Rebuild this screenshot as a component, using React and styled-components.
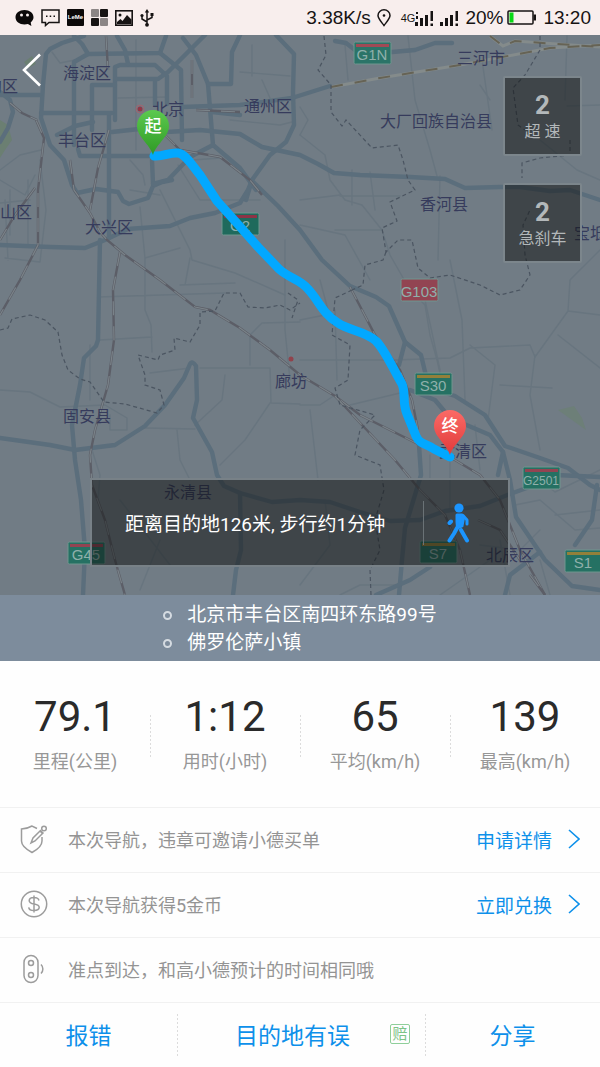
import React from 'react';
import styled, { createGlobalStyle } from 'styled-components';

const stats = [
  { value: '79.1', label: '里程(公里)' },
  { value: '1:12', label: '用时(小时)' },
  { value: '65', label: '平均(km/h)' },
  { value: '139', label: '最高(km/h)' },
];

const alerts = [
  { count: 2, label: '超 速' },
  { count: 2, label: '急刹车' },
];

const places = ['北京市丰台区南四环东路99号', '佛罗伦萨小镇'];

const cities = [
  ['海淀区', 63, 79],
  ['沟区', -14, 92],
  ['北京', 152, 115],
  ['通州区', 244, 112],
  ['丰台区', 58, 146],
  ['山区', 0, 218],
  ['大兴区', 85, 233],
  ['三河市', 457, 64],
  ['大厂回族自治县', 380, 127],
  ['香河县', 420, 210],
  ['宝坻区', 574, 239],
  ['廊坊', 275, 387],
  ['固安县', 63, 422],
  ['永清县', 164, 498],
  ['武清区', 439, 457],
  ['北辰区', 486, 561],
];

const signs = [
  { name: 'G1N', x: 354, y: 42, band: '#a04a55', fill: '#2b7468' },
  { name: 'G2', x: 222, y: 213, band: '#8c3446', fill: '#1f6a5c' },
  { name: 'G103', x: 401, y: 279, band: '#924452', fill: '#924452' },
  { name: 'S30', x: 415, y: 373, band: '#93803a', fill: '#257163' },
  { name: 'G2501', x: 523, y: 467, band: '#924452', fill: '#257163' },
  { name: 'S7', x: 420, y: 541, band: '#93803a', fill: '#257163' },
  { name: 'S1', x: 565, y: 550, band: '#93803a', fill: '#257163' },
  { name: 'G45', x: 68, y: 542, band: '#924452', fill: '#257163' },
];

const highways = [
  'M84 36 62 43 50 49 46 54 43 85 41 118 50 145 64 160 72 185 77 193 96 189 118 192 123 201 129 204 148 198 153 186 162 182 172 180',
  'M74 36 82 44 88 54 160 53 166 36',
  'M74 145V62L88 54M160 53 181 70 182 140',
  'M115 120V67L120 65 155 65 167 76V104',
  'M92 130V85H115M117 79H158L168 72 205 35M155 79V105',
  'M117 36 125 50 128 64M109 114V238',
  'M78 149 80 156H154M152 160 153 184',
  'M0 95H40M41 113H112M57 135 75 126 93 122M112 132 148 128',
  'M183 38 196 55 208 84 213 145 240 168 256 190',
  'M208 84H231L232 52 240 35M276 35 294 54 293 92 294 125 286 142 270 155 252 180 246 200',
  'M150 133 200 130 240 134 262 147 300 155 318 164 334 173 360 175 410 177 445 179 465 188 500 187 520 187 550 191 570 190 600 200',
  'M213 145 190 157 168 180 153 184',
  'M0 92 10 100 13 112 8 128 0 142',
  'M182 107 240 105 292 98 330 86M212 112 240 115',
  'M335 41 346 43 355 50 392 52 415 50 435 43 452 43',
  'M0 245 50 247 85 248 105 240 128 229 170 226 190 218 215 213 240 203 248 190 252 180',
  'M100 240 98 340 96 346 84 358 80 385 72 425 75 460 81 500 85 550 83 595',
  'M0 438 50 445 75 450 115 445 145 426 165 405 184 378 190 364Q192 360 196 366L197 400 193 418 212 452 217 475 224 486 240 493 272 502 300 500 330 502 360 512 390 521 420 520 445 511 480 506 510 494 535 485',
  'M240 493 241 550 236 570 233 595',
  'M252 181 278 206 300 230 322 260 350 286 376 297 389 306 397 324 405 342 421 355 427 380',
  'M405 342 399 365M430 388 455 396 485 415 505 446 540 458 568 468 590 485 600 490',
  'M410 390 435 400 450 418 490 435 503 452 510 480 516 517 545 560 572 586 600 590',
  'M503 452 498 475M600 477 556 475M597 485 592 520 575 545',
  'M419 445 421 475 405 528 402 560 399 595',
  'M376 595 410 580 430 567M505 595 510 575 540 552',
];

const roads = [
  'M0 170 20 155 41 150M52 52 60 63 75 60M118 98 168 97M136 40V150',
  'M0 180 25 195 35 175M0 203 30 200M10 190V235M28 180V245',
  'M40 160 46 210 40 262 5 258M5 200 8 260',
  'M130 160 143 175 145 185M160 190 190 250 192 260 235 273 285 295',
  'M190 258 185 285M140 207 145 258 180 248M145 258 145 310 151 325 152 352M180 285 235 283M98 297 225 293M100 340 152 337',
  'M285 240V330L290 380M250 365V335L262 323 300 322M200 368 270 368 271 403 300 404',
  'M150 373 190 368M225 375 222 400 195 425M270 403 245 440 220 465M145 428 195 429',
  'M0 390 30 392 60 407 105 405 127 418V430H110V415M90 345V400M92 450 100 475 98 500',
  'M177 430 180 460 190 480M140 590 160 540M120 500 170 565',
  'M345 45 348 80M408 36 415 100 430 150 437 176M440 176 438 260M300 135 325 155 330 180 345 200 362 205 382 230 390 255 410 290 425 305 430 335 437 360 445 395',
  'M425 300 440 370M450 260 462 320 465 400M300 200 340 195M300 225 345 235 370 280',
  'M480 85 490 100M567 36 565 100M600 105 567 106M540 140 577 170 600 180M482 60 492 130',
  'M395 360 450 358 470 348 530 345 535 357M470 345 495 365 488 420M500 385 552 388M535 355 530 395 540 450',
  'M568 311 600 315M568 311 570 280 600 250M568 311 535 357M558 335 600 368',
  'M320 280 328 310M300 320 325 315M335 310 337 380M300 360 400 360M350 405 400 393',
  'M300 405 320 405 335 395M310 410 318 480M430 455 430 480M450 420 450 510M475 425 480 470',
  'M540 480 555 492 600 470M515 505 540 500 575 530 600 528M480 545 520 550 540 530M340 595 360 585 400 585',
  'M300 585 330 545 325 500M500 540 510 595M540 560 550 595M555 515 600 510M490 560 440 595',
  'M352 170V205M370 172 375 210M340 196H400M382 230 335 230',
  'M300 107 308 120 300 135M230 120 280 125 292 122M240 72 290 76M252 45V76M262 80 270 98',
  'M130 190 160 195M193 160 220 158M178 165 200 200 260 200',
];

const rails = [
  'M106 36 108 70M109 130 98 168 90 210',
  'M36 120 44 138 38 190 38 245 20 280 0 315',
  'M70 160 74 190 90 213 100 232 107 240 125 255 160 280 195 307 210 310 240 328 270 350 300 375 335 396 360 415 420 445 455 460 480 475 500 500 520 550 545 595',
  'M120 252 113 290 114 340 108 385 95 430 90 455 92 485 105 520 115 560 125 595',
  'M350 287 362 310 375 335 400 370 412 400 418 430',
  'M335 396 362 425 395 460 420 490 445 515 460 550 470 595',
  'M10 103 22 113 37 120M192 60V98M196 110 240 112',
  'M35 188 15 215 0 240M165 135 180 150 220 157 250 180 262 195',
  'M478 520 500 530 520 560M530 575 545 595',
];

const borders = [
  'M324 36 326 55 318 70 331 85 331 112 342 126 346 120 372 148 390 146 398 145 403 160 408 180 415 190 390 202 397 221 382 228 386 252 398 240 412 240 418 268 430 278 450 275 480 285 500 295 520 290 530 275 525 255 523 225 530 210',
  'M540 36 540 50 525 75 513 88 518 125 525 130M570 140 570 155 540 158 522 163 522 178',
  'M386 252 383 260 365 265 363 285 352 290M352 290 335 298 332 335 350 345 348 380 335 388 340 405 375 415 360 430 355 455 380 465 384 490 375 520 380 550 370 570 371 595',
  'M0 330 8 328 12 319 30 315 45 320 58 332 62 355 68 370 80 379 90 382 104 402 125 404 157 413 164 405 160 390 145 385 145 375 138 355 158 360 160 355 175 350 174 338 190 342 200 325 200 312 215 311 224 293 240 293 248 307 265 308 280 305 290 310 300 303M288 293 298 300 292 318',
];

function MapDrawing() {
  return (
    <MapSvg viewBox="0 35 600 560" preserveAspectRatio="xMidYMid slice">
      <defs>
        <linearGradient id="startFill" x1="0" y1="0" x2="0" y2="1">
          <stop offset="0" stopColor="#5cc94f" />
          <stop offset="1" stopColor="#2f9a25" />
        </linearGradient>
        <linearGradient id="endFill" x1="0" y1="0" x2="0" y2="1">
          <stop offset="0" stopColor="#fb6a66" />
          <stop offset="1" stopColor="#e03a3a" />
        </linearGradient>
      </defs>
      <rect x="0" y="35" width="600" height="560" fill="#717c85" />
      <path d="M0 120 8 125 12 140 5 150 0 158zM24 62l8-6 4 8-8 4z" fill="#6b7f72" />
      <path d="M558 410l16-4 8 12 4 12-14-10z" fill="#6d7f78" />
      <g fill="none" strokeLinejoin="round" strokeLinecap="round">
        {roads.map((d) => <path key={d} d={d} stroke="#68757f" strokeWidth="1.4" />)}
        {highways.map((d) => <path key={d} d={d} stroke="#5b6e7c" strokeWidth="4.4" />)}
      </g>
      <g fill="none">
        {rails.map((d) => (
          <g key={d}>
            <path d={d} stroke="#5c5e67" strokeWidth="2.4" />
            <path d={d} stroke="#7a8389" strokeWidth="1.2" strokeDasharray="14 11" />
          </g>
        ))}
        <path d="M331 87 380 78 460 65 550 48 600 45M490 36 503 46 515 41 600 47" stroke="#848b8b" strokeWidth="3" />
        <path d="M331 87 380 78 460 65 550 48 600 45M490 36 503 46 515 41 600 47" stroke="#666355" strokeWidth="2" strokeDasharray="12 12" />
        {borders.map((d) => (
          <path key={d} d={d} stroke="#4b5561" strokeWidth="1.2" strokeDasharray="4 3" />
        ))}
      </g>
      <circle cx="140" cy="109" r="4" fill="none" stroke="#a06570" />
      <circle cx="140" cy="109" r="2.5" fill="#913848" />
      <circle cx="291" cy="359" r="2.5" fill="#91434c" />
      {cities.map(([name, x, y]) => <CityName key={name} x={x} y={y}>{name}</CityName>)}
      {signs.map((s) => (
        <g key={s.name}>
          <rect x={s.x} y={s.y} width="37" height="22" rx="1.5" fill={s.fill} stroke="#71968f" strokeWidth="1" />
          <rect x={s.x + 2} y={s.y + 2} width="33" height="3" fill={s.band} />
          <SignName x={s.x + 18} y={s.y + 18} $small={s.name.length > 4}>{s.name}</SignName>
        </g>
      ))}
      <path
        d="M154 156C163 157 170 152 178 153S194 168 200 175L217 201 235 221 258 247 279 269C290 279 300 279 308 289 320 302 322 313 338 323 350 331 365 331 376 341 385 350 392 367 402 384 406 393 402 402 407 414L416 436C420 445 426 443 434 449L450 457"
        fill="none"
        stroke="#02a8ff"
        strokeWidth="9"
        strokeLinecap="round"
        strokeLinejoin="round"
      />
      <path d="M153 155C150 144 137 137 137 126a16 16 0 0 1 32 0C169 137 156 144 153 155z" fill="url(#startFill)" />
      <path d="M450 455C447 444 434 437 434 426a16 16 0 0 1 32 0C466 437 453 444 450 455z" fill="url(#endFill)" />
      <PinName x="153" y="132">起</PinName>
      <PinName x="450" y="432">终</PinName>
    </MapSvg>
  );
}

function Arrow() {
  return (
    <svg width="12" height="20" viewBox="0 0 12 20" fill="none" stroke="#0d90ea" strokeWidth="1.6">
      <path d="M1 1l10 9L1 19" />
    </svg>
  );
}

function Signal({ extra }) {
  return (
    <svg width="19" height="16" viewBox="0 0 19 16" fill="#161313">
      <path d="M0 12h3v4H0zM5 8h3v8H5zM10 5h3v11h-3zM15.5 1H18v10h-2.5zM15.5 13.500H18V16h-2.5z" />
      {extra && <path d="M1 6h2v3H1zM1 2h2v2H1z" />}
    </svg>
  );
}

function StatusBar() {
  return (
    <Status>
      <StatusIcons>
        <svg width="19" height="18" viewBox="0 0 19 18">
          <path d="M9.5 1C4.500 1 .5 4 .5 8.300s4 7.200 9 7.200c1.200 0 2.300-.2 3.400-.5l3.500 2-.7-3.500c1.700-1.300 2.800-3.200 2.800-5.200C18.500 4 14.500 1 9.500 1z" fill="#0c0909" />
          <circle cx="6.5" cy="6" r="1.5" fill="#f8eeed" />
          <circle cx="12.5" cy="6" r="1.5" fill="#f8eeed" />
        </svg>
        <svg width="19" height="18" viewBox="0 0 19 18">
          <path d="M1 1h17v12.500H8L4.500 16.500v-3H1z" fill="none" stroke="#161313" strokeWidth="1.5" />
          <path d="M5 6.500h1.500V8H5zM8.700 6.500h1.500V8H8.700zM12.500 6.500H14V8h-1.500z" fill="#161313" />
        </svg>
        <LeMe>LeMe</LeMe>
        <svg width="17" height="17" viewBox="0 0 17 17">
          <rect width="8" height="8" rx="1" fill="#8b8585" />
          <rect x="9" width="8" height="8" rx="1" fill="#161313" />
          <rect y="9" width="8" height="8" rx="1" fill="#161313" />
          <rect x="9" y="9" width="8" height="8" rx="1" fill="#8b8585" />
        </svg>
        <svg width="18" height="16" viewBox="0 0 18 16">
          <rect x=".8" y=".8" width="16.4" height="14.4" fill="none" stroke="#161313" strokeWidth="1.6" />
          <path d="M2 14v-2l3.500-3 2 2L12 5l4.500 4.500V14z" fill="#161313" />
          <circle cx="5" cy="5" r="1.5" fill="#161313" />
        </svg>
        <svg width="14" height="18" viewBox="0 0 14 18" fill="none" stroke="#161313" strokeWidth="1.5">
          <path d="M7 2v14M7 13L2 10V7M7 11l5-2.500V5" />
          <path d="M7 0l2.200 3.500H4.800zM10.500 4h3v3h-3z" fill="#161313" stroke="none" />
          <circle cx="2" cy="6.5" r="1.6" fill="#161313" stroke="none" />
          <circle cx="7" cy="15.8" r="1.9" fill="#161313" stroke="none" />
        </svg>
      </StatusIcons>
      <StatusInfo>
        <span>3.38K/s</span>
        <svg width="14" height="18" viewBox="0 0 14 18" fill="none" stroke="#161313" strokeWidth="1.5">
          <path d="M7 16.500C4 12.500 1 9.500 1 6.500a6 5.700 0 0 1 12 0c0 3-3 6-6 10z" />
          <circle cx="7" cy="6.5" r="1.3" fill="#161313" stroke="none" />
        </svg>
        <Network>
          <small>4G</small>
          <Signal extra />
        </Network>
        <Signal />
        <Battery>
          <span>20%</span>
          <svg width="30" height="16" viewBox="0 0 30 16">
            <rect x="1" y="1" width="25" height="13" rx="1" fill="none" stroke="#161313" strokeWidth="1.5" />
            <rect x="26.5" y="4.5" width="2.5" height="6" fill="#161313" />
            <rect x="2.5" y="2.5" width="4" height="10" fill="#08d815" />
          </svg>
        </Battery>
        <span>13:20</span>
      </StatusInfo>
    </Status>
  );
}

function App() {
  return (
    <Page>
      <GlobalStyle />
      <StatusBar />
      <MapArea>
        <MapDrawing />
        <BackButton aria-label="返回">
          <svg width="20" height="34" viewBox="0 0 20 34" fill="none" stroke="#fff" strokeWidth="2.6">
            <path d="M18 1.500L2 17l16 15.500" />
          </svg>
        </BackButton>
        <Alerts>
          {alerts.map((item) => (
            <Alert key={item.label}>
              <AlertCount>{item.count}</AlertCount>
              <AlertLabel>{item.label}</AlertLabel>
            </Alert>
          ))}
        </Alerts>
        <WalkCard>
          <WalkText>距离目的地126米, 步行约1分钟</WalkText>
          <WalkButton aria-label="步行导航">
            <svg width="24" height="40" viewBox="0 0 24 40" fill="none" stroke="#1b95ff" strokeLinecap="round" strokeLinejoin="round">
              <circle cx="12" cy="5" r="4.6" fill="#1b95ff" stroke="none" />
              <path d="M10 12h5l1.500 3-1.500 8-4.500 2-.5-6z" fill="#1b95ff" strokeWidth="3" />
              <path d="M4 18.500L2.500 20" strokeWidth="4" />
              <path d="M16 12.500l4 4.500v4" strokeWidth="3" />
              <path d="M10 25L7 30.500 2.500 37.500M14 27l6 10.500" strokeWidth="4" />
            </svg>
          </WalkButton>
        </WalkCard>
      </MapArea>

      <Places>
        <PlaceList>
          {places.map((place) => <Place key={place}>{place}</Place>)}
        </PlaceList>
      </Places>

      <Stats>
        {stats.map((item) => (
          <Stat key={item.label}>
            <StatValue>{item.value}</StatValue>
            <StatLabel>{item.label}</StatLabel>
          </Stat>
        ))}
      </Stats>

      <Row>
        <RowIcon viewBox="0 0 28 30">
          <path d="M17 4.500L12 2C8.500 4 5 5 1.500 5v12c0 5 5 8.500 10.500 11.500C17.500 25.500 22 22 22 17v-4" />
          <path d="M11 19l2-5 7.500-7.500 2.500 2.500-8 8zM20 7l2 2" />
          <circle cx="24" cy="4.5" r="2.3" />
        </RowIcon>
        <RowText>本次导航，违章可邀请小德买单</RowText>
        <RowLink href="#detail">申请详情<Arrow /></RowLink>
      </Row>
      <Row>
        <RowIcon viewBox="0 0 28 30">
          <circle cx="14" cy="15" r="12.7" />
          <path d="M19 11.500c-.5-2-2.500-3-5-3s-4.800 1-4.800 3.200c0 4.600 10 2.200 10 6.600 0 2.300-2.500 3.200-5.200 3.200s-5-1-5.300-3.200M14 6.500v17" />
        </RowIcon>
        <RowText>本次导航获得5金币</RowText>
        <RowLink href="#exchange">立即兑换<Arrow /></RowLink>
      </Row>
      <Row>
        <RowIcon viewBox="0 0 28 30">
          <rect x="4" y="1.5" width="14" height="27" rx="7" />
          <circle cx="11" cy="9" r="2.5" />
          <circle cx="11" cy="21" r="2.5" />
          <path d="M21 10.500c2.500 2.500 2.500 6.500 0 9" />
        </RowIcon>
        <RowText>准点到达，和高小德预计的时间相同哦</RowText>
      </Row>

      <Footer>
        <FooterButton>报错</FooterButton>
        <FooterButton $withBadge>
          目的地有误
          <Badge>赔</Badge>
        </FooterButton>
        <FooterButton>分享</FooterButton>
      </Footer>
    </Page>
  );
}

const GlobalStyle = createGlobalStyle`
  *, *::before {
    box-sizing: border-box;
  }
  body {
    margin: 0;
    background: #fefefe;
    font-family: Roboto, "Noto Sans CJK SC", sans-serif;
  }
  button {
    padding: 0;
    border: none;
    background: none;
    font-family: inherit;
  }
  svg {
    display: block;
    flex: none;
  }
`;

const Page = styled.div`
  display: flex;
  flex-direction: column;
`;

const Status = styled.header`
  display: flex;
  align-items: center;
  justify-content: space-between;
  height: 35px;
  padding: 0 9px 0 15px;
  background: #f8eeed;
  color: #161313;
  font-family: "Liberation Sans", sans-serif;
  font-size: 19px;
`;

const StatusIcons = styled.div`
  display: flex;
  align-items: center;
  gap: 7px;
`;

const LeMe = styled.span`
  width: 17px;
  height: 17px;
  border-radius: 1px;
  background: #0c0909;
  color: #fff;
  font-size: 6px;
  font-weight: bold;
  line-height: 17px;
  text-align: center;
`;

const StatusInfo = styled.div`
  display: flex;
  align-items: center;
  gap: 6px;
`;

const Network = styled.span`
  display: flex;
  align-items: center;
  margin-left: 4px;

  small {
    font-size: 11px;
  }
`;

const Battery = styled.span`
  display: flex;
  align-items: center;
  gap: 4px;
`;

const MapArea = styled.main`
  position: relative;
  overflow: hidden;
  aspect-ratio: 600 / 560;
`;

const MapSvg = styled.svg`
  width: 100%;
  height: 100%;
`;

const CityName = styled.text`
  fill: #363b5c;
  font-size: 16px;
`;

const SignName = styled.text`
  fill: #8fb0ab;
  font-family: "Liberation Sans", sans-serif;
  font-size: ${(props) => (props.$small ? 12 : 15)}px;
  text-anchor: middle;
`;

const PinName = styled.text`
  fill: #fff;
  font-size: 17px;
  font-weight: 500;
  text-anchor: middle;
`;

const BackButton = styled.button`
  position: absolute;
  top: 18px;
  left: 22px;
`;

const Alerts = styled.div`
  position: absolute;
  top: 41px;
  right: 18px;
  display: flex;
  flex-direction: column;
  gap: 27px;
`;

const Alert = styled.div`
  display: flex;
  flex-direction: column;
  align-items: center;
  justify-content: center;
  width: 79px;
  height: 80px;
  padding-top: 4px;
  border: 2px solid #7c868c;
  border-radius: 2px;
  background: rgba(18, 20, 20, 0.52);
  background-clip: padding-box;
  color: #b3b8ba;
`;

const AlertCount = styled.strong`
  font-size: 26px;
  line-height: 28px;
`;

const AlertLabel = styled.span`
  font-size: 16px;
  line-height: 26px;
`;

const WalkCard = styled.div`
  position: absolute;
  right: 15%;
  bottom: 28px;
  left: 15%;
  display: flex;
  align-items: center;
  height: 89px;
  border: 2px solid #788187;
  background: rgba(18, 20, 20, 0.52);
  background-clip: padding-box;
`;

const WalkText = styled.p`
  flex: 1;
  margin: 0;
  padding-left: 33px;
  color: #fff;
  font-size: 19px;
  white-space: nowrap;
`;

const WalkButton = styled.button`
  display: flex;
  align-items: center;
  width: 85px;
  height: 44px;
  padding-left: 23px;
  border-left: 1px solid #6a7276;
`;

const Places = styled.section`
  display: flex;
  justify-content: center;
  padding: 6px 0 4px;
  background: #7d8c9c;
`;

const PlaceList = styled.ul`
  margin: 0;
  padding: 0;
  list-style: none;
`;

const Place = styled.li`
  display: flex;
  align-items: center;
  gap: 15px;
  color: #fff;
  font-size: 19px;
  line-height: 28px;

  &::before {
    content: '';
    width: 9px;
    height: 9px;
    border: 2px solid #d5dbe1;
    border-radius: 50%;
  }
`;

const Stats = styled.section`
  display: grid;
  grid-template-columns: repeat(4, 1fr);
  padding: 32px 0 33px;
`;

const Stat = styled.div`
  display: flex;
  flex-direction: column;
  align-items: center;
  gap: 9px;

  & + & {
    background: repeating-linear-gradient(#dcdcdc 0 2px, transparent 2px 4px) 0 60% / 1px 44px no-repeat;
  }
`;

const StatValue = styled.strong`
  color: #2a2a2a;
  font-size: 42px;
  font-weight: 400;
  line-height: 48px;
`;

const StatLabel = styled.span`
  color: #979797;
  font-size: 18px;
  line-height: 24px;
`;

const Row = styled.div`
  display: flex;
  align-items: center;
  height: 65px;
  padding: 0 20px 2px;
  border-top: 1px solid #f1f1f1;
`;

const RowIcon = styled.svg`
  width: 28px;
  height: 30px;
  fill: none;
  stroke: #9c9c9c;
  stroke-width: 1.5;
`;

const RowText = styled.span`
  flex: 1;
  margin-left: 20px;
  color: #949494;
  font-size: 18px;
`;

const RowLink = styled.a`
  display: flex;
  align-items: center;
  gap: 16px;
  color: #0d90ea;
  font-size: 19px;
  text-decoration: none;
`;

const Footer = styled.footer`
  display: grid;
  grid-template-columns: 177fr 248fr 175fr;
  height: 65px;
  border-top: 1px solid #f1f1f1;
`;

const FooterButton = styled.button`
  display: flex;
  align-items: center;
  justify-content: ${(props) => (props.$withBadge ? 'flex-end' : 'center')};
  gap: 40px;
  padding-right: ${(props) => (props.$withBadge ? 15 : 0)}px;
  padding-bottom: 2px;
  color: #0d90ea;
  font-size: 23px;

  & + & {
    background: repeating-linear-gradient(#dcdcdc 0 2px, transparent 2px 4px) 0 50% / 1px 42px no-repeat;
  }
`;

const Badge = styled.span`
  width: 20px;
  height: 20px;
  border: 1px solid #8fcf9a;
  border-radius: 2px;
  color: #7cc488;
  font-size: 15px;
  line-height: 18px;
  text-align: center;
`;

export default App;
